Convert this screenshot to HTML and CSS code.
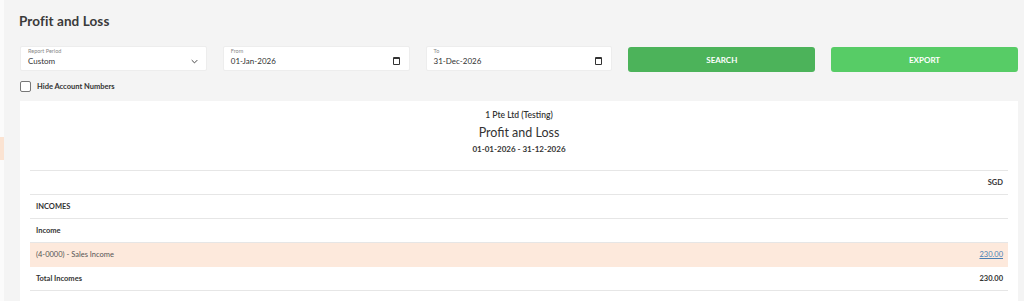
FILE: index.html
```html
<!DOCTYPE html>
<html lang="en">
<head>
    <meta charset="UTF-8">
    <meta name="viewport" content="width=device-width, initial-scale=1.0">
    <title>Profit and Loss</title>
    <link rel="stylesheet" href="styles.css">
</head>
<body>

    <aside class="side-edge">
        <div class="side-active"></div>
    </aside>

    <main class="page">
        <h1 class="page-title">Profit and Loss</h1>

        <div class="filter-row">
            <div class="field">
                <span class="field-label">Report Period</span>
                <div class="field-value">
                    <span>Custom</span>
                    <svg class="chevron" viewBox="0 0 10 6" width="7" height="5"><path d="M1 1l4 4 4-4" fill="none" stroke="#444" stroke-width="1.4"/></svg>
                </div>
            </div>
            <div class="field">
                <span class="field-label">From</span>
                <div class="field-value">
                    <span>01-Jan-2026</span>
                    <span class="cal-icon"></span>
                </div>
            </div>
            <div class="field">
                <span class="field-label">To</span>
                <div class="field-value">
                    <span>31-Dec-2026</span>
                    <span class="cal-icon"></span>
                </div>
            </div>
            <button class="btn btn-search">SEARCH</button>
            <button class="btn btn-export">EXPORT</button>
        </div>

        <label class="check-row">
            <span class="check-box"></span>
            <span>Hide Account Numbers</span>
        </label>

        <section class="report-card">
            <div class="report-head">
                <div class="company">1 Pte Ltd (Testing)</div>
                <div class="report-title">Profit and Loss</div>
                <div class="report-range">01-01-2026 - 31-12-2026</div>
            </div>

            <div class="report-row bold">
                <span></span>
                <span>SGD</span>
            </div>
            <div class="report-row bold">
                <span>INCOMES</span>
                <span></span>
            </div>
            <div class="report-row bold">
                <span>Income</span>
                <span></span>
            </div>
            <div class="report-row highlight">
                <span>(4-0000) - Sales Income</span>
                <a href="#" class="amount-link">230.00</a>
            </div>
            <div class="report-row bold">
                <span>Total Incomes</span>
                <span>230.00</span>
            </div>
        </section>
    </main>

</body>
</html>
```

FILE: styles.css
```css
:root {
    --page-bg: #f4f4f4;
    --surface: #ffffff;
    --border: #e6e6e6;
    --text: #333333;
    --text-soft: #555555;
    --green: #4cb35a;
    --green-light: #57cc66;
    --peach: #fde9dc;
    --link: #4a7fb5;
}

/* base */
body {
    margin: 0;
    display: flex;
    min-height: 301px;
    background-color: var(--page-bg);
    color: var(--text);
    font-family: Lato, "Open Sans", Arial, sans-serif;
}

/* left menu edge */
.side-edge {
    width: 4px;
    flex-shrink: 0;
    background-color: #fbfbfb;
    padding-top: 137px;
}

.side-active {
    height: 23px;
    background-color: #fbe3d2;
}

/* page */
.page {
    flex: 1;
    padding: 0 6px 0 16px;
    min-width: 0;
}

.page-title {
    margin: 13px 0 0 -1px;
    font-size: 13.5px;
    line-height: 16px;
    font-weight: 700;
    color: #3a3a3a;
    letter-spacing: 0.1px;
}

/* filters */
.filter-row {
    display: grid;
    grid-template-columns: repeat(5, 1fr);
    gap: 16px;
    margin-top: 17px;
}

.field {
    height: 25px;
    box-sizing: border-box;
    background-color: var(--surface);
    border: 1px solid #ededed;
    border-radius: 2px;
    padding: 1px 7px 0 7px;
}

.field-label {
    display: block;
    font-size: 5.5px;
    line-height: 7px;
    color: #888;
}

.field-value {
    display: flex;
    justify-content: space-between;
    align-items: center;
    font-size: 8px;
    line-height: 12px;
    color: #333;
}

.chevron {
    margin-right: 1px;
}

.cal-icon {
    width: 5px;
    height: 5px;
    border: 1px solid #333;
    border-top-width: 2px;
    border-radius: 1px;
    margin-right: 2px;
}

.btn {
    height: 25px;
    margin-top: 1px;
    border: none;
    border-radius: 3px;
    color: #ffffff;
    font-family: inherit;
    font-size: 8px;
    font-weight: 700;
    cursor: pointer;
}

.btn-search {
    background-color: var(--green);
}

.btn-export {
    background-color: var(--green-light);
}

/* checkbox */
.check-row {
    display: flex;
    align-items: center;
    gap: 6px;
    margin-top: 9px;
    font-size: 7.5px;
    font-weight: 700;
    color: #333;
}

.check-box {
    width: 9px;
    height: 9px;
    border: 1px solid #777;
    border-radius: 2px;
    background-color: var(--surface);
}

/* report */
.report-card {
    margin-top: 9px;
    background-color: var(--surface);
    padding: 0 10px 20px 10px;
}

.report-head {
    text-align: center;
    padding-top: 9px;
    height: 60px;
    border-bottom: 1px solid var(--border);
}

.company {
    font-size: 8.5px;
    line-height: 11px;
    font-weight: 600;
}

.report-title {
    margin-top: 4px;
    font-size: 12.5px;
    line-height: 15px;
}

.report-range {
    margin-top: 4px;
    font-size: 8px;
    line-height: 10px;
    font-weight: 700;
}

.report-row {
    display: flex;
    justify-content: space-between;
    align-items: center;
    height: 23px;
    padding: 0 5px 0 6px;
    border-bottom: 1px solid var(--border);
    font-size: 7.5px;
    color: var(--text-soft);
}

.report-row.bold {
    font-weight: 700;
    color: #333;
}

.report-row.highlight {
    background-color: var(--peach);
    border-bottom-color: var(--peach);
}

.amount-link {
    color: var(--link);
    text-decoration: underline;
}
```
